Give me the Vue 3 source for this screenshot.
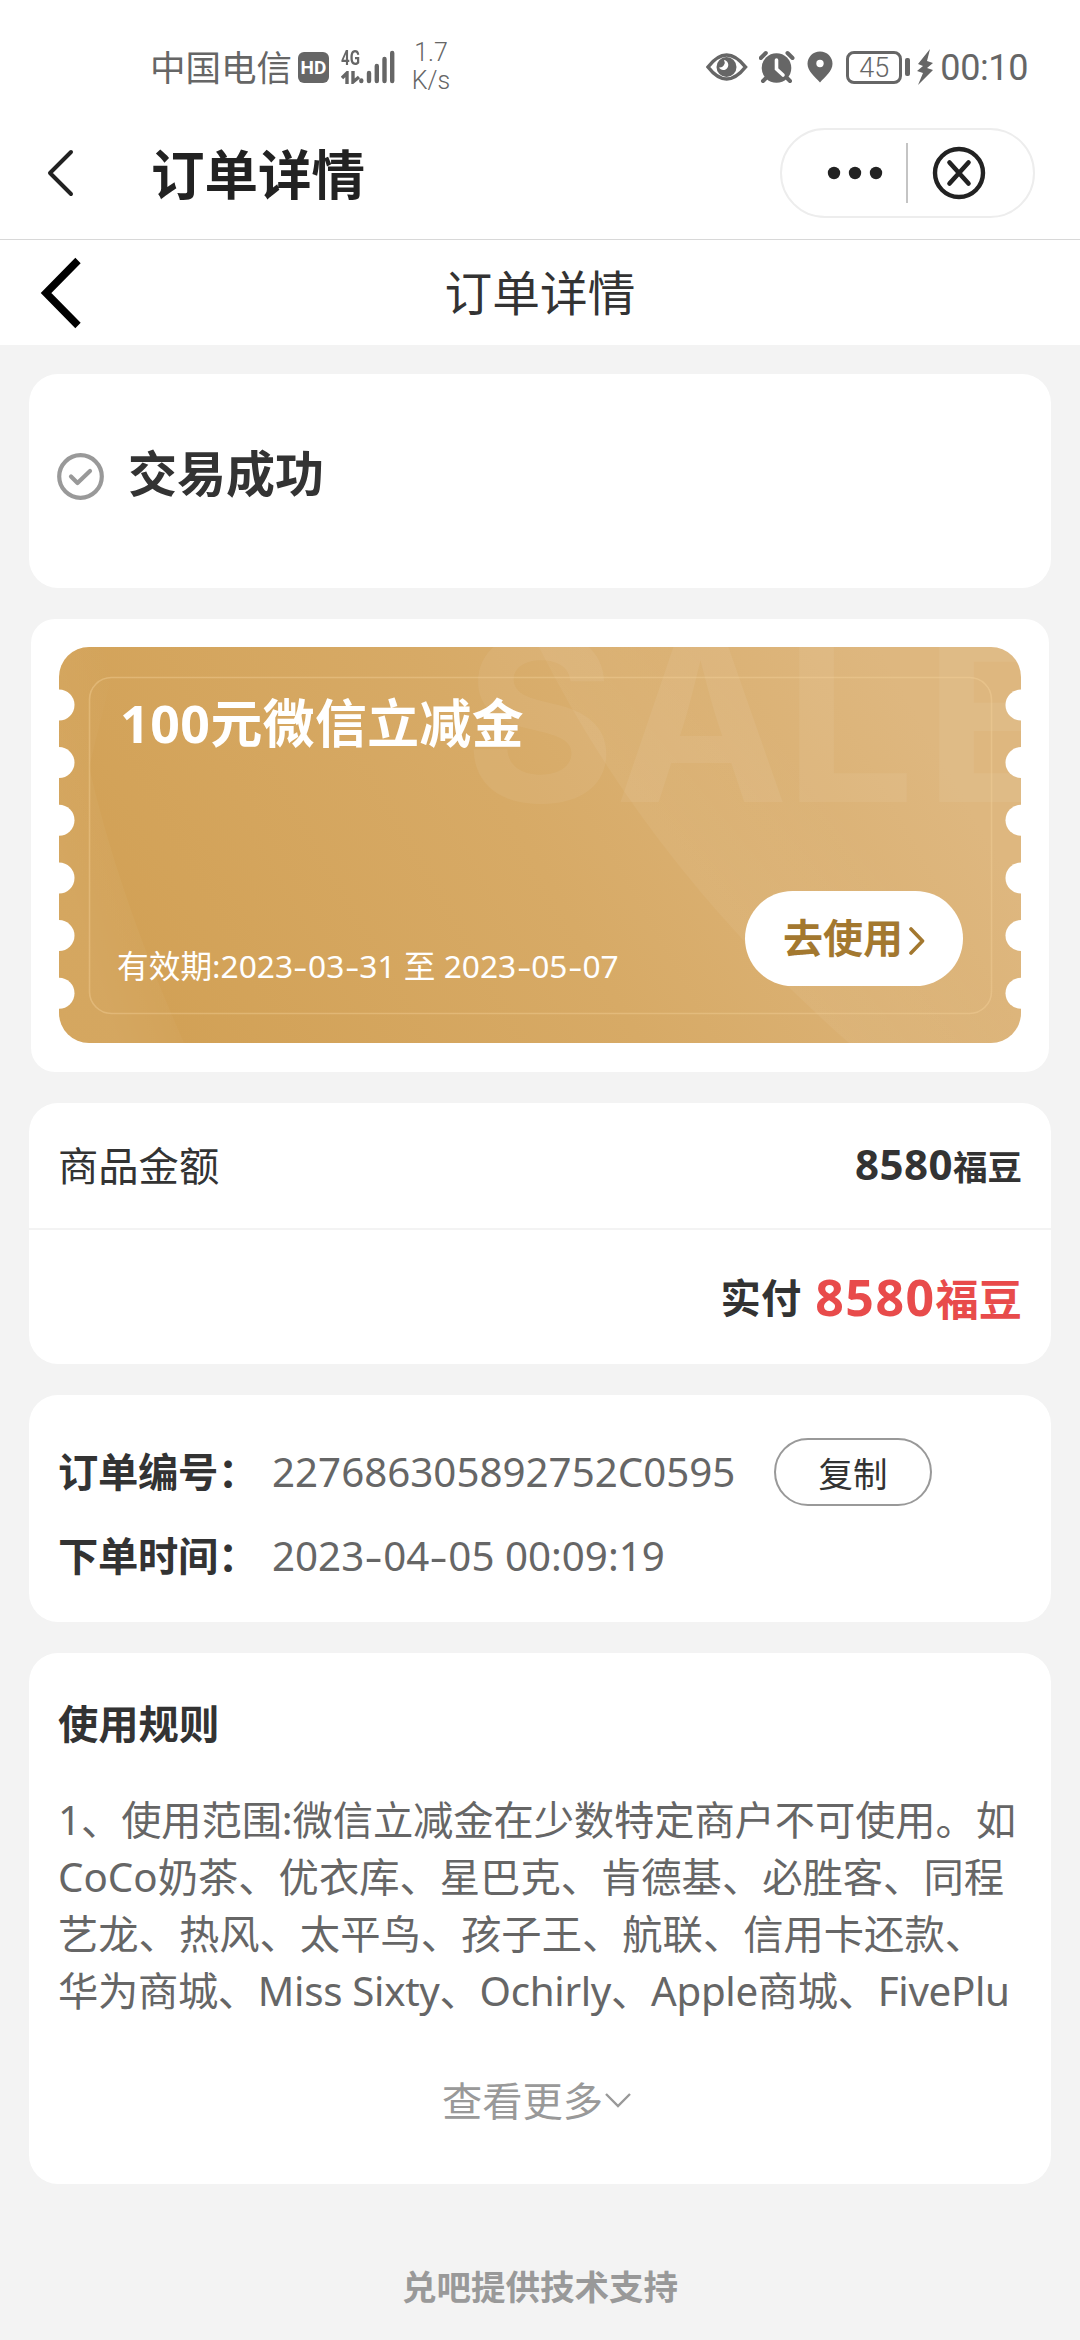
<script setup>
const notches = [58, 115.6, 173.3, 231, 288.6, 346.2]
const rules = [
  { text: '1、使用范围:微信立减金在少数特定商户不可使用。如', w: 958 },
  { text: 'CoCo奶茶、优衣库、星巴克、肯德基、必胜客、同程', w: 946 },
  { text: '艺龙、热风、太平鸟、孩子王、航联、信用卡还款、', w: 927 },
  { text: '华为商城、Miss Sixty、Ochirly、Apple商城、FivePlu', w: 952 },
]
</script>

<template>
  <div class="page">
    <header class="status">
      <span class="carrier">中国电信</span>
      <span class="hd">HD</span>
      <div class="net">
        <span class="g4">4G</span>
        <svg width="20" height="13" viewBox="0 0 20 13" fill="none" stroke="#666" stroke-width="3.4">
          <path d="M6 13V2L1 7M12 0v11l6-5" />
        </svg>
      </div>
      <svg class="bars" width="36" height="34" viewBox="0 0 36 34" stroke="#666" stroke-width="4.4" stroke-linecap="round">
        <path d="M2.3 30.500v.6M10 23v8M17.800 16v15M25.500 9v22M33.200 3v28" />
      </svg>
      <div class="speed"><span>1.7</span><span>K/s</span></div>
      <div class="right">
        <svg width="42" height="30" viewBox="0 0 42 30">
          <path d="M2 15Q20.500-9 39.500 15Q20.500 39 2 15Z" fill="none" stroke="#666" stroke-width="3.600" />
          <circle cx="20.500" cy="15" r="10" fill="#666" />
          <path d="M18 8a5 5 0 1 1-5 7.500a5 5 0 0 0 5-7.500z" fill="#fff" />
        </svg>
        <svg class="alarm" width="36" height="34" viewBox="0 0 36 34">
          <circle cx="17.500" cy="18" r="14.800" fill="#666" />
          <path d="M1.800 8l5-5M28.500 3l5 5M7 28l-3 3M28 28l3 3" stroke="#666" stroke-width="4" stroke-linecap="round" />
          <path d="M17.500 10v9l6.500 6" fill="none" stroke="#fff" stroke-width="3.600" stroke-linecap="round" />
        </svg>
        <svg class="pin" width="26" height="32" viewBox="0 0 26 32">
          <path d="M13 .5C6 .5.500 6 .500 12.800.500 20 8 26 13 31.500 18 26 25.500 20 25.500 12.800 25.500 6 20 .5 13 .5Z" fill="#666" />
          <circle cx="13" cy="12.500" r="3.700" fill="#fff" />
        </svg>
        <span class="battery">45</span>
        <i class="nub"></i>
        <svg class="bolt" width="16" height="36" viewBox="0 0 16 36"><path d="M13 0 1 15 6 17 0 22 6 24 1 36 16 21 10 19 16 14 10 12Z" fill="#666" /></svg>
        <span class="clock">00:10</span>
      </div>
    </header>

    <nav class="appbar">
      <svg width="28" height="50" viewBox="0 0 28 50" fill="none" stroke="#222" stroke-width="4" stroke-linecap="round" stroke-linejoin="round"><path d="M25 4 4 25l21 21" /></svg>
      <h1>订单详情</h1>
      <div class="capsule">
        <svg width="251" height="86" viewBox="782 130 251 86">
          <g fill="#222"><circle cx="834" cy="173" r="6.200" /><circle cx="855" cy="173" r="6.200" /><circle cx="876" cy="173" r="6.200" /></g>
          <path d="M907 143v60" stroke="#c4c4c4" stroke-width="2" />
          <g fill="none" stroke="#222"><circle cx="959" cy="173" r="24" stroke-width="4.400" /><path d="M949.500 162.500l19 21m0-21l-19 21" stroke-width="4.600" stroke-linecap="round" /></g>
        </svg>
      </div>
    </nav>

    <nav class="subbar">
      <svg width="42" height="74" viewBox="0 0 42 74" fill="none" stroke="#000" stroke-width="7.500"><path d="M38 4.500 6 37l32 32.500" /></svg>
      <h2>订单详情</h2>
    </nav>

    <main>
      <section class="card done">
        <svg width="47" height="47" viewBox="0 0 47 47" fill="none" stroke="#999">
          <circle cx="23.500" cy="23.500" r="21.300" stroke-width="4.200" />
          <path d="M14 23.500l6.500 6.500L33 18" stroke-width="4.200" stroke-linecap="round" stroke-linejoin="round" />
        </svg>
        <strong>交易成功</strong>
      </section>

      <section class="card wrap">
        <div class="coupon">
          <svg class="art" width="962" height="396" viewBox="0 0 962 396">
            <defs>
              <linearGradient id="gold" gradientUnits="userSpaceOnUse" x1="80" y1="330" x2="780" y2="-70">
                <stop offset="0" stop-color="#d2a156" /><stop offset=".5" stop-color="#d7aa66" /><stop offset="1" stop-color="#deb77f" />
              </linearGradient>
              <linearGradient id="ray" gradientUnits="userSpaceOnUse" x1="640" y1="230" x2="760" y2="130">
                <stop offset="0" stop-color="#fff" stop-opacity=".05" /><stop offset="1" stop-color="#fff" stop-opacity="0" />
              </linearGradient>
              <linearGradient id="glow" gradientUnits="userSpaceOnUse" x1="0" y1="200" x2="100" y2="170">
                <stop offset="0" stop-color="#fff" stop-opacity=".06" /><stop offset="1" stop-color="#fff" stop-opacity="0" />
              </linearGradient>
              <mask id="ticket">
                <rect width="962" height="396" rx="30" fill="#fff" />
                <template v-for="y in notches" :key="y"><circle cx="0" :cy="y" r="15.500" /><circle cx="962" :cy="y" r="15.500" /></template>
              </mask>
            </defs>
            <g mask="url(#ticket)">
              <rect width="962" height="396" fill="url(#gold)" />
              <path d="M480 0Q590 220 790 396H962V0Z" fill="url(#ray)" />
              <path d="M0 0V396H125Q60 250 30 120L60 0Z" fill="url(#glow)" />
              <text class="sale" y="155" x="405 556 725 865">SALE</text>
              <rect x="30.500" y="30.500" width="902" height="336" rx="22" fill="none" stroke="#f4d29c" stroke-opacity=".4" stroke-width="1.600" />
            </g>
          </svg>
          <div class="info">
            <h3>100元微信立减金</h3>
            <div class="foot">
              <span class="valid">有效期:2023<i>-</i>03<i>-</i>31 至 2023<i>-</i>05<i>-</i>07</span>
              <button class="use"><span>去使用</span><svg width="16" height="30" viewBox="0 0 16 30" fill="none" stroke="#a3782f" stroke-width="3.600" stroke-linecap="round" stroke-linejoin="round"><path d="M2 3 13.500 15 2 27" /></svg></button>
            </div>
          </div>
        </div>
      </section>

      <section class="card price">
        <div class="row"><span class="name">商品金额</span><b class="amt">8580<small>福豆</small></b></div>
        <div class="row pay"><b class="name">实付</b><b class="total">8580<small>福豆</small></b></div>
      </section>

      <section class="card order">
        <div class="line"><b>订单编号：</b><span class="no">227686305892752C0595</span><button class="copy">复制</button></div>
        <div class="line"><b>下单时间：</b><span class="time">2023<i>-</i>04<i>-</i>05 00:09:19</span></div>
      </section>

      <section class="card rules">
        <h4>使用规则</h4>
        <svg v-for="r in rules" :key="r.text" class="rule" width="964" height="57"><text x="0" y="44" :textLength="r.w" lengthAdjust="spacing">{{ r.text }}</text></svg>
        <div class="more">查看更多<svg width="30" height="20" viewBox="0 0 30 20" fill="none" stroke="#999" stroke-width="2.400"><path d="M3 3l12 12L27 3" /></svg></div>
      </section>
    </main>
    <footer>兑吧提供技术支持</footer>
  </div>
</template>

<style>
body { margin: 0; background: #f3f3f3; }
</style>

<style scoped>
* { box-sizing: border-box; }
.page { width: 1080px; height: 2340px; overflow: hidden; background: #f3f3f3; color: #333; font-family: "Noto Sans", "Noto Sans CJK SC", sans-serif; }
h1, h2, h3, h4 { margin: 0; }
button { font-family: inherit; padding: 0; border: 0; }
svg { display: block; flex: none; }
.status { height: 110px; padding: 24px 52px 0 150px; background: #fff; display: flex; align-items: center; color: #666; }
.status > *, .right > * { flex: none; }
.carrier { width: 148px; font-size: 35.5px; line-height: 40px; }
.hd { width: 31px; height: 31px; border-radius: 6px; background: #666; color: #fff; font: bold 19px/31px "Roboto", sans-serif; text-align: center; }
.net { margin-left: 12px; width: 18px; height: 34px; display: flex; flex-direction: column; justify-content: space-between; }
.g4 { font: bold 21px/17px "Roboto", sans-serif; transform: scaleX(.72); transform-origin: left; white-space: nowrap; }
.speed { margin-left: 17px; width: 38px; display: flex; flex-direction: column; align-items: center; font: 300 25px/28.5px "Roboto", sans-serif; }
.right { margin-left: auto; display: flex; align-items: center; }
.alarm { margin-left: 11px; }
.pin { margin-left: 12px; }
.battery { margin-left: 13px; width: 56px; height: 33px; border: 3px solid #666; border-radius: 8px; font: 300 27px/28px "Roboto", sans-serif; text-align: center; }
.nub { margin-left: 3px; width: 5px; height: 18px; border-radius: 2px; background: #666; }
.bolt { margin-left: 7px; }
.clock { margin-left: 7px; font: 36px/38px "Roboto", sans-serif; letter-spacing: -.4px; padding-top: 2px; }
.appbar { height: 130px; padding: 0 45px 4px 46px; background: #fff; border-bottom: 1px solid #d8d8d8; display: flex; align-items: center; }
.appbar h1 { margin: 0 auto 0 77px; padding-top: 4px; font-size: 53.5px; line-height: 70px; color: #222; }
.capsule { width: 255px; height: 90px; border: 2px solid #ededed; border-radius: 45px; }
.subbar { height: 105px; padding: 0 40px; background: #fff; display: flex; align-items: center; }
.subbar h2 { flex: 1; padding-right: 42px; text-align: center; font-size: 47.7px; font-weight: 400; line-height: 60px; }
main { padding: 29px 29px 0; display: flex; flex-direction: column; gap: 31px; }
.card { background: #fff; border-radius: 29px; }
.done { height: 214px; padding: 0 29px 9px 28px; display: flex; align-items: center; gap: 24px; }
.done strong { font-size: 49px; line-height: 64px; padding-bottom: 7px; }
.wrap { margin: 0 2px; height: 453px; padding: 28px; border-radius: 24px; }
.coupon { position: relative; width: 962px; height: 396px; }
.art { position: absolute; left: 0; top: 0; }
.sale { font-family: "Inter", sans-serif; font-weight: 700; font-size: 232px; fill: #fff; fill-opacity: .06; }
.info { position: relative; height: 396px; padding: 44px 58px 57px 61px; display: flex; flex-direction: column; justify-content: space-between; color: #fff; }
.info h3 { font-size: 51.8px; line-height: 64px; letter-spacing: .5px; }
.foot { display: flex; align-items: flex-end; justify-content: space-between; }
.valid { margin-left: -3px; font-size: 31.7px; line-height: 40px; white-space: nowrap; }
.valid i, .time i { display: inline-block; font-style: normal; margin: 0 .075em; transform: scaleX(1.4); }
.use { width: 218px; height: 95px; border-radius: 48px; background: #fff; color: #a3782f; font-size: 40px; font-weight: 700; display: flex; align-items: center; justify-content: center; }
.use span { padding-bottom: 5px; }
.use svg { margin: 4px 0 0 6px; }
.price { height: 261px; }
.row { height: 125px; padding: 0 29px; display: flex; align-items: center; justify-content: space-between; font-size: 40.3px; line-height: 60px; }
.amt small { font-size: 34.5px; letter-spacing: 0; }
.amt { font-size: 42px; letter-spacing: .5px; }
.pay { height: 136px; padding-top: 2px; border-top: 2px solid #f3f3f3; justify-content: flex-end; gap: 14px; }
.total { color: #e84b4b; font-size: 50px; letter-spacing: 1.5px; padding-top: 1px; }
.total small { font-size: 43.2px; letter-spacing: 0; }
.order { height: 227px; padding: 34px 29px 0; font-size: 40.3px; }
.line { height: 84px; display: flex; align-items: center; }
.line b { width: 214px; padding-bottom: 4px; white-space: nowrap; letter-spacing: -.3px; }
.line span { color: #666; white-space: nowrap; }
.no { width: 502px; }
.copy { width: 158px; height: 68px; margin-top: 1px; border: 2px solid #999; border-radius: 34px; background: #fff; color: #333; font-size: 34.5px; }
.rules { height: 531px; padding: 41px 29px 0; }
.rules h4 { font-size: 40.3px; line-height: 60px; margin-bottom: 37px; }
.rule { font-size: 40.3px; fill: #666; }
.more { margin-top: 52px; padding-right: 5px; display: flex; align-items: center; justify-content: center; color: #999; font-size: 40.3px; line-height: 60px; }
footer { margin-top: 73px; text-align: center; font-size: 34.5px; line-height: 60px; font-weight: 700; color: #999; }
</style>
